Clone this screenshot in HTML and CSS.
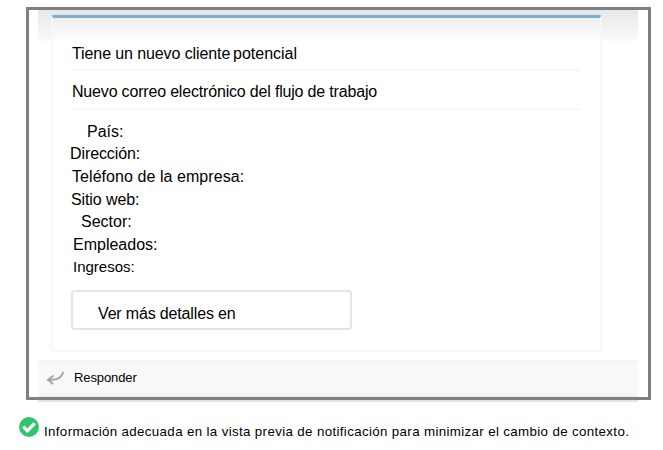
FILE: index.html
```html
<!DOCTYPE html>
<html lang="es">
<head>
<meta charset="utf-8">
<title>Vista previa de notificación</title>
<link rel="stylesheet" href="styles.css">
</head>
<body>
<main class="preview">
  <div class="message">
    <section class="card">
      <div class="row title"><span class="t1">Tiene un nuevo cliente</span><span class="t2">potencial</span></div>
      <div class="row subtitle"><span>Nuevo correo electrónico del flujo de trabajo</span></div>
      <ul class="fields">
        <li class="pais">País:</li>
        <li class="direccion">Dirección:</li>
        <li class="telefono">Teléfono de la empresa:</li>
        <li class="sitio">Sitio web:</li>
        <li class="sector">Sector:</li>
        <li class="empleados">Empleados:</li>
        <li class="ingresos">Ingresos:</li>
      </ul>
      <div class="details"><span>Ver más detalles en</span></div>
    </section>
    <footer class="reply">
      <svg class="arrow" width="20" height="16" viewBox="0 0 20 16"><path d="M17 2.500C15.500 8 10.500 10.500 2.500 9.700M7 6L2 9.700L6.500 13.500" fill="none" stroke="#a6a6a6" stroke-width="2" stroke-linecap="round"/></svg>
      <span>Responder</span>
    </footer>
  </div>
</main>
<div class="edge"></div>
<div class="note">
  <svg width="20" height="20" viewBox="0 0 20 20"><circle cx="10" cy="10" r="10" fill="#33c46f"/><path d="M4.200 9.700L8.300 13.700L15.700 6.400" fill="none" stroke="#fff" stroke-width="3.200"/></svg>
  <span>Información adecuada en la vista previa de notificación para minimizar el cambio de contexto.</span>
</div>
</body>
</html>
```
FILE: styles.css
```css
* { box-sizing: border-box; }
body {
  margin: 0;
  padding-top: 7px;
  width: 663px;
  height: 450px;
  overflow: hidden;
  background: #fff;
  color: #000;
  font: 16px/22px "Liberation Sans", Arial, sans-serif;
  white-space: nowrap;
}
.preview {
  width: 625px;
  height: 393px;
  margin-left: 26px;
  padding: 0 10px 0 9px;
  border: 3px solid #808080;
}
.message {
  height: 387px;
  padding-top: 5px;
  background: linear-gradient(#e7e7e7, #f9f9f9 29px, #fff 33px);
}
.card {
  width: 551px;
  height: 337px;
  margin-left: 13px;
  padding: 0 19px;
  border: 2px solid #f8f8f8;
  border-top: 3px solid #82adcd;
  border-radius: 3px;
  background: linear-gradient(#efefef, #fafafa 18px, #fff 25px);
  box-shadow: 0 -1px 1px #cde5f3;
}
.row { border-bottom: 2px solid #f8f8f8; width: 508px; }
.title { display: flex; height: 53px; padding-top: 25px; }
.t1 { width: 161px; letter-spacing: -0.1px; }
.subtitle { height: 39px; padding-top: 10px; letter-spacing: -0.18px; }
.fields {
  list-style: none;
  margin: 11px 0 0;
  padding: 0;
  height: 157.500px;
}
.fields li { height: 22.500px; }
.pais { padding-left: 15px; }
.fields .direccion { margin: -0.500px 0 0.500px -2px; letter-spacing: -0.1px; }
.telefono { letter-spacing: 0.06px; }
.sitio { margin-left: -1px; letter-spacing: -0.1px; }
.sector { padding-left: 9px; }
.empleados, .ingresos { padding-left: 1px; }
.ingresos { font-size: 15px; }
.details {
  width: 281px;
  height: 40px;
  margin-top: 11.500px;
  margin-left: -1px;
  padding: 11px 0 0 25px;
  border: 2px solid #e4e4e9;
  border-radius: 4px;
  letter-spacing: -0.16px;
}
.reply {
  display: flex;
  align-items: center;
  height: 37px;
  margin-top: 8px;
  padding: 0 0 4px 8px;
  border-top: 2px solid #f5f5f5;
  background: linear-gradient(#f9f9f9 31px, #eee);
  font-size: 13px;
}
.reply span { margin-left: 8px; letter-spacing: -0.1px; }
.edge { width: 600px; height: 2px; margin-left: 38px; background: #e3e3e3; }
.note {
  display: flex;
  margin: 15px 0 0 19px;
  font-size: 13.330px;
  letter-spacing: 0.350px;
}
.note span { margin: 4px 0 0 5px; }
```
